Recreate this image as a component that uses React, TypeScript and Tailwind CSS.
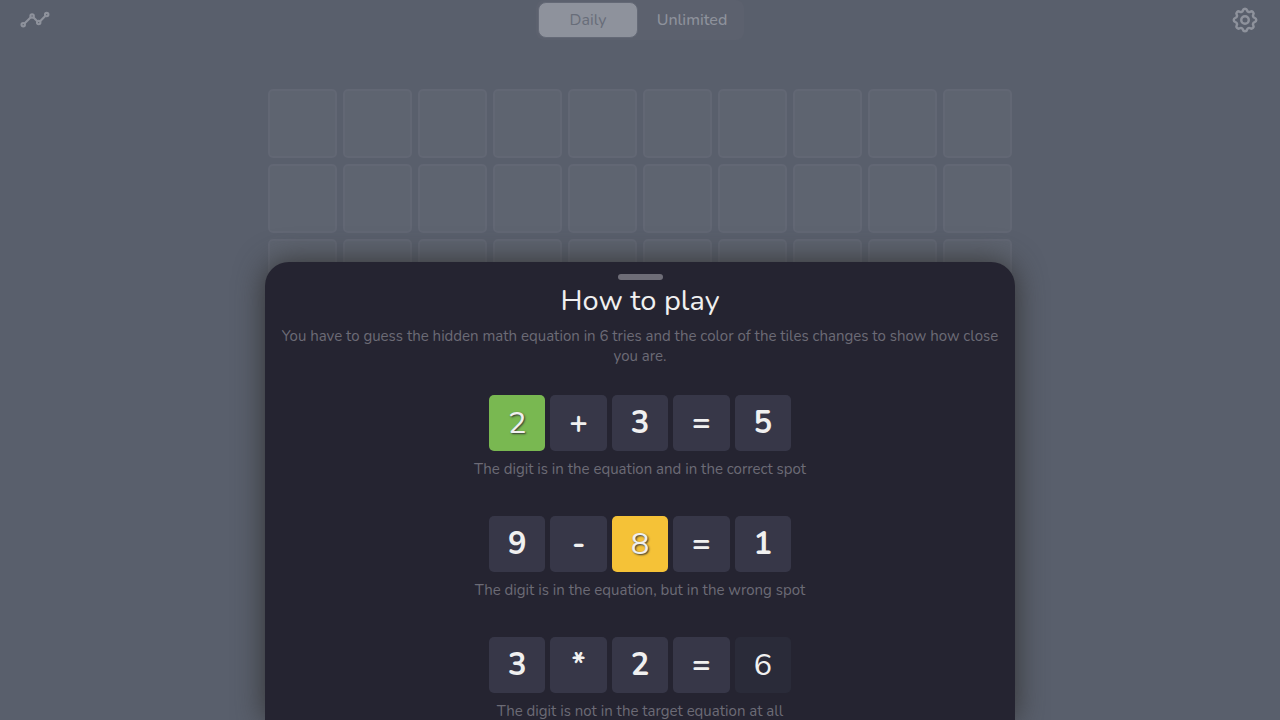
import { HiOutlineCog } from "react-icons/hi";

type Tone = "plain" | "correct" | "present" | "absent";

interface Example {
  symbols: string[];
  marked: number;
  tone: Tone;
  caption: string;
}

const toneClasses: Record<Tone, string> = {
  plain: "bg-[#373748] font-bold",
  correct: "bg-[#79b851] [text-shadow:1px_1px_2px_#333]",
  present: "bg-[#f5c237] [text-shadow:1px_1px_2px_#333]",
  absent: "bg-[#2a2b39]",
};

const examples: Example[] = [
  {
    symbols: ["2", "+", "3", "=", "5"],
    marked: 0,
    tone: "correct",
    caption: "The digit is in the equation and in the correct spot",
  },
  {
    symbols: ["9", "-", "8", "=", "1"],
    marked: 2,
    tone: "present",
    caption: "The digit is in the equation, but in the wrong spot",
  },
  {
    symbols: ["3", "*", "2", "=", "6"],
    marked: 4,
    tone: "absent",
    caption: "The digit is not in the target equation at all",
  },
];

function TrendIcon() {
  return (
    <svg width="30" height="30" viewBox="0 0 30 30" fill="none" stroke="currentColor" strokeWidth="2.1">
      <circle cx="3.2" cy="19.7" r="1.7" />
      <circle cx="12.1" cy="11" r="1.7" />
      <circle cx="18.7" cy="17.6" r="1.7" />
      <circle cx="26.7" cy="9.6" r="1.7" />
      <path d="M4.5 18.4 10.8 12.2M13.3 12.2 17.5 16.4M19.9 16.4 25.5 10.8" />
    </svg>
  );
}

function Header() {
  return (
    <header className="grid h-10 grid-cols-[1fr_auto_1fr] items-center px-5 text-[#8e929c]">
      <button type="button" aria-label="Statistics" className="justify-self-start">
        <TrendIcon />
      </button>
      <nav className="flex gap-1 rounded-lg bg-[#5c616e] p-0.5 text-base">
        <button
          type="button"
          className="h-9 w-[100px] rounded-lg border border-[#646976] bg-[#8e929c] text-[#686d79]"
        >
          Daily
        </button>
        <button type="button" className="h-9 w-[100px] rounded-lg font-medium">
          Unlimited
        </button>
      </nav>
      <button type="button" aria-label="Settings" className="justify-self-end">
        <HiOutlineCog size={30} />
      </button>
    </header>
  );
}

function Board() {
  return (
    <main className="mx-auto mt-[49px] grid max-w-[744px] grid-cols-10 gap-1.5">
      {Array.from({ length: 60 }, (_, i) => (
        <div
          key={i}
          className="aspect-square rounded-[5px] border-2 border-[#626774] bg-[#5e6470]"
        />
      ))}
    </main>
  );
}

function ExampleRow({ symbols, marked, tone, caption }: Example) {
  return (
    <figure className="flex flex-col items-center gap-2">
      <div className="flex w-[302px] gap-[5px] text-[31px] leading-none text-[#f0f0f0]">
        {symbols.map((symbol, i) => (
          <span
            key={i}
            className={`flex h-14 flex-1 items-center justify-center rounded-[5px] ${toneClasses[i === marked ? tone : "plain"]}`}
          >
            {symbol}
          </span>
        ))}
      </div>
      <figcaption className="text-[15px] leading-5 text-[#6c6b76]">{caption}</figcaption>
    </figure>
  );
}

function HowToPlay() {
  return (
    <section
      role="dialog"
      aria-labelledby="how-to-play"
      className="absolute inset-x-0 top-[262px] bottom-0 mx-auto max-w-[750px] overflow-hidden rounded-t-3xl bg-[#252431] px-4 pt-3 text-center shadow-[0_0_30px_#333]"
    >
      <div className="mx-auto h-1.5 w-[45px] rounded-full bg-[#6e6d77]" />
      <h1 id="how-to-play" className="mt-1 text-[29px] leading-[34px] text-[#f0f0f0]">
        How to play
      </h1>
      <p className="mt-2 text-[15px] leading-5 text-[#6c6b76]">
        You have to guess the hidden math equation in 6 tries and the color of the tiles changes to
        show how close you are.
      </p>
      <div className="mt-[29px] flex flex-col gap-[37px]">
        {examples.map((example) => (
          <ExampleRow key={example.caption} {...example} />
        ))}
      </div>
    </section>
  );
}

export default function App() {
  return (
    <div className="relative h-screen overflow-hidden bg-[#595f6c] font-[Nunito,Lato,sans-serif]">
      <Header />
      <Board />
      <HowToPlay />
    </div>
  );
}
